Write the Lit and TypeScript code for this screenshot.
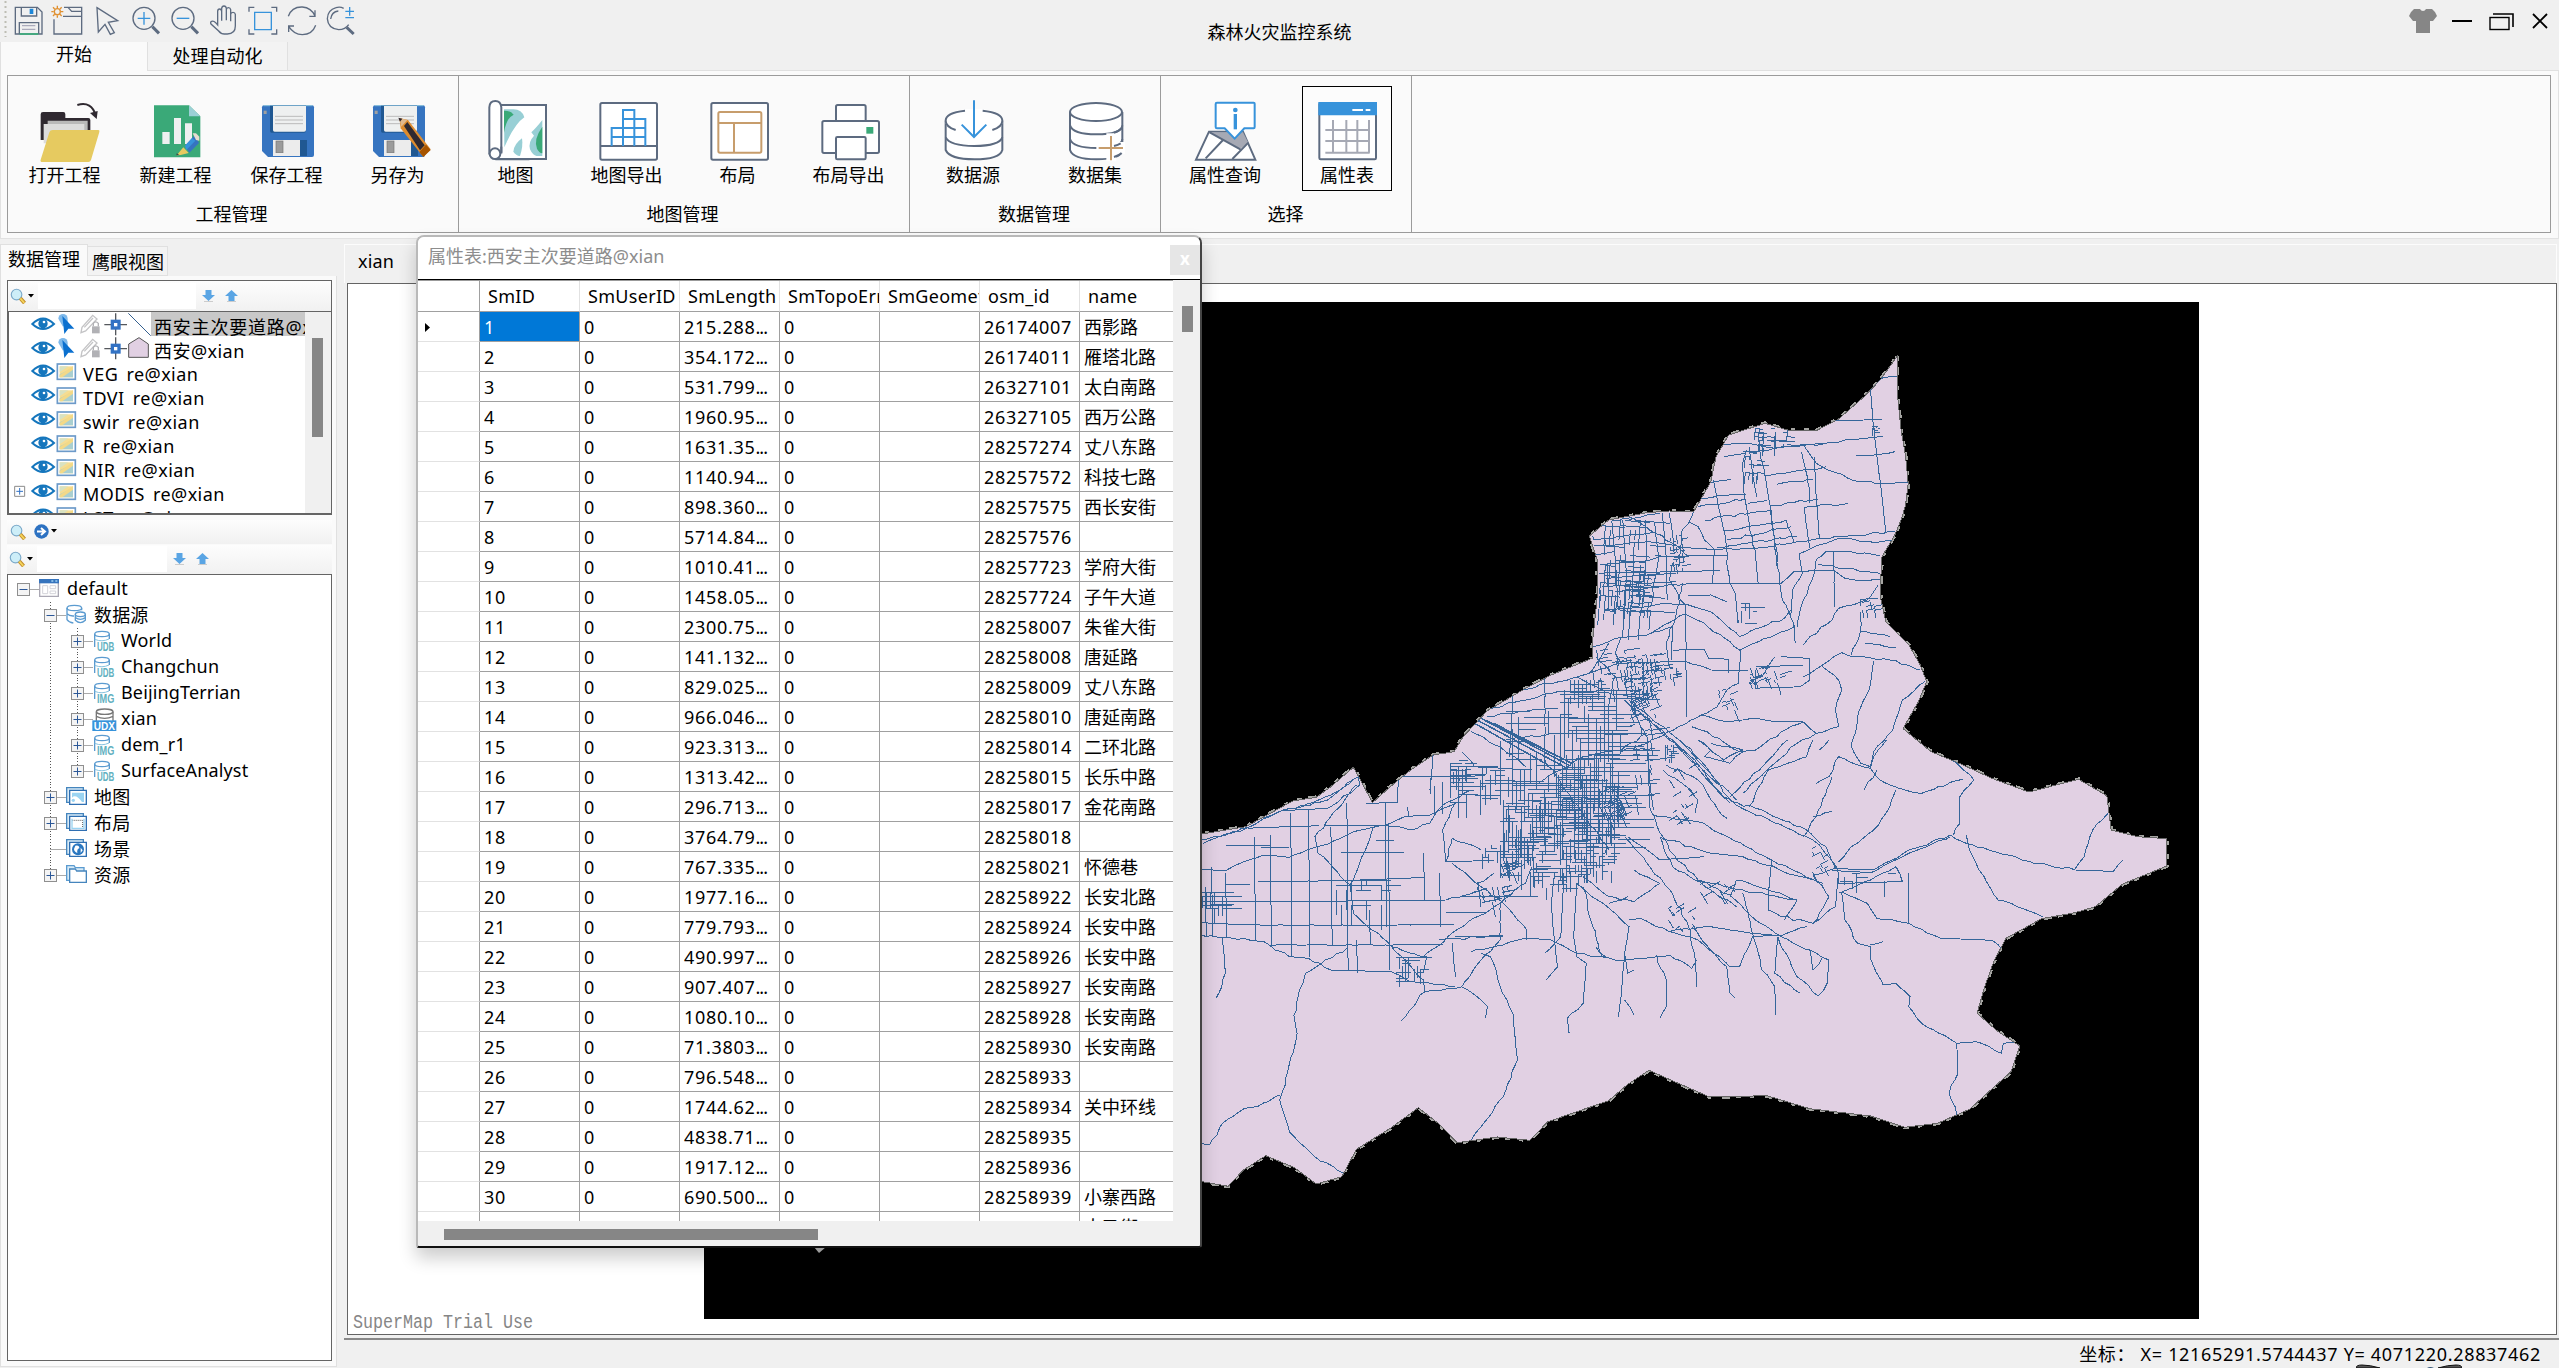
import { LitElement, html, svg, css, nothing } from "lit";
import { customElement, property } from "lit/decorators.js";
import { classMap } from "lit/directives/class-map.js";

const INK = "#5d6b80";
const BLUE = "#3793db";

/* ---------- quick-access icons, each on a 90-unit square ---------- */
const quickIcons = [
  svg`<path d="M4 4h66l14 14v66H4z"/><path d="M22 4v26h46V4"/><path d="M49 10h7v12h-7z" fill="#1c86d8" stroke="#1c86d8"/><path d="M16 84V50h58v34"/><path d="M24 59h40M24 70h40" stroke="#aab" /><path d="M17 84h56" stroke="#3aae7b" stroke-width="5"/>`,
  svg`<g stroke="#e09030" stroke-width="4"><circle cx="13" cy="17" r="9"/><path d="M13-1v7M13 28v7M-5 17h7M24 17h7M0 4l5 5M21 25l5 5M26 4l-5 5M0 30l5-5"/></g><path d="M3 40v44h83V4H33M86 16H56L45 4M30 31h56"/>`,
  svg`<path d="M15 5l62 39-28 5 18 31-12 5-16-30-20 23z"/>`,
  svg`<circle cx="39" cy="37" r="33"/><path d="M20 37h38M39 18v38" stroke="${BLUE}"/><path d="M64 62l20 20" stroke-width="9"/>`,
  svg`<circle cx="39" cy="37" r="33"/><path d="M20 37h38" stroke="${BLUE}"/><path d="M64 62l20 20" stroke-width="9"/>`,
  svg`<path d="M26 48V16q0-7 6-7 5 0 6 7v28V7q1-7 7-7 6 0 7 7v36V11q1-6 6-6 6 0 7 6v35V25q1-6 7-6 6 0 7 6v35q0 24-24 24H46q-10 0-17-9L6 54q-3-6 2-8 6-2 12 4l6 7z"/>`,
  svg`<path d="M3 17V4h16M70 4h16v13M86 70v14H70M19 84H3V70"/><path d="M20 19h50v52H20z" stroke="${BLUE}"/>`,
  svg`<path d="M4 31Q14 2 46 3q27 2 38 27M84 13v18H67M86 58Q76 86 46 86 20 85 5 61M5 78V60h16"/>`,
  svg`<path d="M53 7Q42 1 30 5 5 12 4 38q2 30 34 33 20 0 30-15"/><path d="M37 15q-20 2-23 24" /><path d="M58 16h26M71 3v26M58 35h26" stroke="${BLUE}"/><path d="M62 64l21 20" stroke-width="9"/>`,
];

/* ---------- ribbon icons, each on a 192-unit square, x centred on 0 ---------- */
const floppy = svg`<path d="M-69 16H75q6 0 6 6V165q0 6-6 6H-57L-75 153V22q0-6 6-6z" fill="#3674c0"/><path d="M-70 17H76" stroke="#8fc6dd" stroke-width="3"/><path d="M-51 17H57V92q0 6-6 6H-46q-5 0-5-6z" fill="#205892"/><path d="M-42 18H57V89q0 6-6 6H-37q-5 0-5-5z" fill="#eef0f0"/><path d="M-36 49H48M-36 60H48M-36 71H48" stroke="#bbb" stroke-width="3"/><rect x="-70" y="32" width="9" height="10" fill="#a0a0a0"/><rect x="-42" y="120" width="102" height="48" fill="#ececec"/><rect x="39" y="120" width="21" height="48" fill="#205892"/><rect x="-33" y="123" width="21" height="35" fill="#9b9b9b" stroke="#777" stroke-width="2"/>`;
const ribbonIcons: Record<string, unknown> = {
  open: svg`<path d="M-73 185V43q0-7 7-7H-5q6 0 6 7v11H70q6 0 6 6V120H-73z" fill="#2f2930"/><path d="M-52 62H68V130H-52z" fill="#b9b9b9"/><path d="M-64 72H58V130H-64z" fill="#dcdcdc"/><path d="M-37 90H100q5 0 3 6L78 180q-2 6-8 6H-68q-7 0-5-7L-47 97q2-7 10-7z" fill="#e6ca60"/><path d="M37 15Q80 2 93 48" fill="none" stroke="#2f2930" stroke-width="6"/><path d="M75 39l23-6-3 24z" fill="#2f2930"/>`,
  create: svg`<path d="M-66 16H39L73 49V172H-66z" fill="#3aa978"/><path d="M39 16L73 49H39z" fill="#9bd0d6"/><path d="M-41 96h22v36h-22zM-6 54h21v78H-6zM27 70h21v62H27z" fill="#eef0f0"/><path d="M27 137L57 105 69 129 40 158z" fill="#3674c0"/><path d="M27 137L48 114 58 122 31 150z" fill="#3793db"/><path d="M50 100h10l10 10v12L60 120z" fill="#e8ddd0"/><path d="M24 142L40 159 16 165 4 166z" fill="#e6ca60" transform="translate(-2 0)"/><path d="M2 160l8 5-9 1z" fill="#444"/>`,
  save: floppy,
  saveAs: svg`${floppy}<path d="M4 54L30 60 98 148 76 171 8 85z" fill="#de8c2e"/><path d="M18 78L28 66 80 136 66 151z" fill="#2f2930"/><path d="M4 54L28 60 10 80z" fill="#e0b98e"/><path d="M1 53l12 3-7 9z" fill="#2f2930"/><path d="M84 134L98 150 76 171 64 156z" fill="#a65400"/>`,
  map: svg`<g fill="#fff" stroke="${INK}" stroke-width="6"><path d="M-60 15H90V177H-60z"/><path d="M-44 158V22Q-46 3-62 3-79 3-80 22V160z"/><circle cx="-63" cy="161" r="16"/><path d="M-62 178H40" /><path d="M-44 158V140"/></g><path d="M-36 28h28q26 0 33 24-30 20-60 90z" fill="#98cfd5"/><path d="M-36 32q20 0 29 12-22 10-29 54z" fill="#3aa978"/><path d="M79 60Q60 84 46 97l8 10Q36 126 42 148q8 18 20 20H79z" fill="#98cfd5"/><path d="M79 80Q52 118 63 146q6 12 16 14z" fill="#3aa978"/><path d="M18 115Q-6 132-8 155q8 12 20 13 10-30 6-53z" fill="#98cfd5"/>`,
  mapExport: svg`<rect x="-80" y="9" width="170" height="170" rx="5" fill="#fff" stroke="${INK}" stroke-width="6"/><path d="M-80 138H90" stroke="${INK}" stroke-width="6"/><path d="M-46 138V84H55V138M-12 138V30H22V138M-12 57H55V84M-46 111H55" fill="none" stroke="${BLUE}" stroke-width="6"/>`,
  layout: svg`<rect x="-80" y="9" width="170" height="170" rx="5" fill="#fff" stroke="${INK}" stroke-width="6"/><rect x="-59" y="36" width="129" height="122" rx="5" fill="none" stroke="#c79d6c" stroke-width="6"/><path d="M-59 69H70M-12 69V158" stroke="#c79d6c" stroke-width="6"/>`,
  layoutExport: svg`<g fill="#fff" stroke="${INK}" stroke-width="6"><rect x="-39" y="15" width="89" height="60" rx="5"/><rect x="-80" y="63" width="170" height="96" rx="5"/><rect x="-39" y="111" width="89" height="67" rx="4"/></g><rect x="52" y="81" width="21" height="20" fill="#3aa978"/>`,
  source: svg`<g fill="#fff" stroke="${INK}" stroke-width="6"><path d="M-82 62V150Q-70 178 4 178 80 178 88 150V62" /><ellipse cx="3" cy="62" rx="85" ry="33" stroke="#fff"/><path d="M-24 32Q-82 38-82 62-82 80-52 90M29 32Q88 38 88 62 88 80 58 90M-82 112Q-70 137 4 138 80 137 88 112" fill="none"/></g><path d="M3 1V110M-34 74L3 111 40 74" fill="none" stroke="${BLUE}" stroke-width="6"/>`,
  dataset: svg`<g fill="#fff" stroke="${INK}" stroke-width="6"><path d="M-75 36V150Q-66 178 4 178 80 178 82 150V36"/><ellipse cx="3" cy="36" rx="78" ry="27"/><path d="M-75 76Q-66 103 4 103 80 103 82 76M-75 117Q-66 144 4 144 80 144 82 117" fill="none"/></g><path d="M34 100h30v84H34zM4 126h86v36H4z" fill="#fff"/><path d="M57 98q14-4 24-14M57 138q12-3 20-8M57 171q16-5 23-12" stroke="${INK}" stroke-width="6" fill="none"/><path d="M48 108V181M11 144H84" stroke="#c79d6c" stroke-width="6"/>`,
  query: svg`<path d="M-48 95H54L91 179H-87z" fill="#fff" stroke="${INK}" stroke-width="6"/><path d="M-46 97H54L70 128 45 147z" fill="#a6a9b4"/><path d="M-46 97L46 148M-58 175L-6 120M22 177L70 128" fill="none" stroke="${INK}" stroke-width="6"/><path d="M-24 8H86Q89 8 89 11V81Q89 85 86 85H58L29 116-1 85H-24Q-28 85-28 81V12Q-28 8-24 8z" fill="#fff" stroke="${BLUE}" stroke-width="6"/><circle cx="31" cy="30" r="7" fill="${BLUE}"/><path d="M31 42V88" stroke="${BLUE}" stroke-width="10"/>`,
  table: svg`<rect x="-83" y="9" width="170" height="169" rx="4" fill="#fff" stroke="${INK}" stroke-width="6"/><path d="M-86 6H90V46H-86z" fill="${BLUE}"/><path d="M16 30H48M56 30H70" stroke="#fff" stroke-width="6"/><path d="M-65 90H68M-65 123H68M-65 158H68M-42 60V158M-2 60V158M31 60V158M66 60V158" stroke="#a6a9b4" stroke-width="6"/>`,
};

interface Tool { icon: string; label: string; active?: boolean }
const ribbonGroups: { title: string; kind: string; tools: Tool[] }[] = [
  { title: "工程管理", kind: "g1", tools: [{ icon: "open", label: "打开工程" }, { icon: "create", label: "新建工程" }, { icon: "save", label: "保存工程" }, { icon: "saveAs", label: "另存为" }] },
  { title: "地图管理", kind: "g2", tools: [{ icon: "map", label: "地图" }, { icon: "mapExport", label: "地图导出" }, { icon: "layout", label: "布局" }, { icon: "layoutExport", label: "布局导出" }] },
  { title: "数据管理", kind: "g3", tools: [{ icon: "source", label: "数据源" }, { icon: "dataset", label: "数据集" }] },
  { title: "选择", kind: "g4", tools: [{ icon: "query", label: "属性查询" }, { icon: "table", label: "属性表", active: true }] },
];

@customElement("ribbon-bar")
export class RibbonBar extends LitElement {
  static styles = css`
    :host { display: block; }
    .box { box-sizing: border-box; height: 158px; border: 1px solid #9b9b9b; display: flex; }
    .group { box-sizing: border-box; border-right: 1px solid #9b9b9b; display: flex; flex-direction: column; }
    .g1 { width: 451px; padding-left: 1px; } .g2 { width: 451px; padding-left: 1px; }
    .g3 { width: 251px; padding-left: 2px; } .g4 { width: 251px; padding-left: 3px; }
    .tools { display: flex; padding-top: 10px; }
    .tool { width: 111px; display: flex; justify-content: center; }
    .g3 .tool, .g4 .tool { width: 122px; }
    .face { box-sizing: border-box; width: 90px; height: 105px; padding-top: 13px; border: 1px solid transparent; display: flex; flex-direction: column; align-items: center; white-space: nowrap; }
    .active { border-color: #000; background: #fcfcfc; }
    svg { width: 64px; height: 64px; overflow: visible; flex: none; }
    .label { line-height: 22px; font-size: 18px; margin-top: 0; }
    .title { text-align: center; line-height: 24px; margin-top: 11px; padding-right: 4px; }
  `;
  render() {
    return html`<div class="box">${ribbonGroups.map((g) => html`
      <div class="group ${g.kind}">
        <div class="tools">${g.tools.map((t) => html`
          <div class="tool"><div class=${classMap({ face: true, active: !!t.active })}>
            <svg viewBox="-96 0 192 192">${ribbonIcons[t.icon]}</svg>
            <div class="label">${t.label}</div>
          </div></div>`)}
        </div>
        <div class="title">${g.title}</div>
      </div>`)}</div>`;
  }
}

/* ---------- side panel ---------- */
const magnifier = svg`<circle cx="8" cy="8" r="5.6" fill="#cdeef8" stroke="#7ba9c9" stroke-width="1.2"/><path d="M12 12l4.5 5" stroke="#c08a28" stroke-width="4"/><path d="M12 12l4.2 4.7" stroke="#f4d45c" stroke-width="2"/>`;
const magTool = html`<svg class="mag" viewBox="0 0 18 18">${magnifier}</svg>`;
const caret = html`<svg class="caret" viewBox="0 0 6 4"><path d="M0 0h6L3 3.5z"/></svg>`;
const arrowDown = html`<svg class="arrow" viewBox="0 0 13 12"><path d="M3.5 0h6v5H13L6.5 11 0 5h3.5z" fill="#5aa5e4"/><path d="M2 11.5h9" stroke="#ccc"/></svg>`;
const arrowUp = html`<svg class="arrow" viewBox="0 0 13 12"><path d="M3.5 11h6V6H13L6.5 0 0 6h3.5z" fill="#5aa5e4"/><path d="M2 11.5h9" stroke="#ccc"/></svg>`;

const eye = svg`<path d="M70 36Q102 4 135 36 102 66 70 36z" fill="#fff" stroke="#1576bd" stroke-width="6"/><circle cx="102" cy="35" r="14" fill="#1576bd"/><circle cx="105" cy="30" r="4" fill="#fff"/>`;
const vectorMarks = svg`<path d="M148 20a14 14 0 1 1 28 0l0 10-14 14z" fill="#7db8ea"/><path d="M160 12L196 50H178L166 66z" fill="#0b70cf"/>
  <g fill="none" stroke="#c4c4c6" stroke-width="4"><path d="M216 62l3-16 32-36 13 11-34 36z"/><path d="M226 46l26-28"/></g><rect x="249" y="43" width="23" height="21" fill="#b1b1b5"/><path d="M253 43V34q7-9 15 0v9" fill="none" stroke="#b1b1b5" stroke-width="4"/>
  <path d="M286 38h68M320 4v66" stroke="#55585d" stroke-width="4"/><rect x="305" y="23" width="30" height="30" fill="#3272c4"/><rect x="315" y="33" width="10" height="10" fill="#fff"/>`;
const rasterMark = svg`<rect x="145" y="15" width="54" height="46" fill="#fff" stroke="#6c9ac9" stroke-width="5"/><rect x="152" y="22" width="40" height="33" fill="#f6dd92"/><path d="M152 22h26l-26 18z" fill="#d8e2c2"/><path d="M152 55V46l40-20v29z" fill="#a9cfd0"/><path d="M152 48L192 22v10L160 55h-8z" fill="#f3d987"/>`;
const boxedPlus = svg`<path d="M17 22h30v30H17z" fill="#fff" stroke="#8b8b8b" stroke-width="3"/><path d="M22 37h20M32 27v20" stroke="#3272c4" stroke-width="3"/>`;

const layers: { name: string; kind: "line" | "area" | "raster"; plus?: boolean }[] = [
  { name: "西安主次要道路@xian", kind: "line" }, { name: "西安@xian", kind: "area" },
  { name: "VEG re@xian", kind: "raster" }, { name: "TDVI re@xian", kind: "raster" }, { name: "swir re@xian", kind: "raster" },
  { name: "R re@xian", kind: "raster" }, { name: "NIR re@xian", kind: "raster" }, { name: "MODIS re@xian", kind: "raster", plus: true },
  { name: "LST re@xian", kind: "raster" },
];

const C1 = "#5b9bd0", C2 = "#87c3df";
const db = (tag: string, tint: string) => svg`<ellipse cx="27" cy="9" rx="22" ry="8" fill="#fff" stroke="${C1}" stroke-width="4"/><path d="M5 9V48M49 9V24" stroke="${C1}" stroke-width="4"/><path d="M5 25Q27 34 48 24" fill="none" stroke="${C2}" stroke-width="3"/><text x="12" y="61" font-size="38" font-weight="bold" textLength="52" lengthAdjust="spacingAndGlyphs" fill="${tint}" font-family="Liberation Sans Narrow, Liberation Sans, sans-serif">${tag}</text>`;
const sheet = (inner: unknown) => svg`<path d="M2 2H52V46H2z" fill="#d8ebf7" stroke="#4585bd" stroke-width="4"/><path d="M11 10H61V52H11z" fill="#fff" stroke="#2f6fb2" stroke-width="4"/>${inner}`;
const treeIcons: Record<string, unknown> = {
  root: svg`<path d="M2 2H58V52H2z" fill="#fff" stroke="#aaa8b4" stroke-width="4"/><path d="M0 0H60V13H0z" fill="#3674bd"/><path d="M37 6H43M49 6H55" stroke="#9fd0f2" stroke-width="4"/><path d="M11 20H26V44H11zM33 20H50V29H33zM33 36H50V44H33z" fill="none" stroke="#d4d4da" stroke-width="3"/>`,
  sources: svg`<ellipse cx="25" cy="9" rx="22" ry="8" fill="#fff" stroke="${C1}" stroke-width="4"/><path d="M3 9V44Q8 52 22 54M3 26Q10 34 24 33M47 9V16" fill="none" stroke="${C1}" stroke-width="4"/><ellipse cx="43" cy="28" rx="15" ry="7" fill="#fff" stroke="${C1}" stroke-width="4"/><path d="M28 28V46Q43 60 58 46V28M28 38Q43 48 58 38" fill="none" stroke="${C1}" stroke-width="4"/>`,
  udb: db("UDB", "#62b0c0"),
  img: db("IMG", "#62b0c0"),
  udx: svg`<ellipse cx="35" cy="8" rx="25" ry="8" fill="#fff" stroke="#777" stroke-width="4"/><path d="M10 8V36M60 8V36M10 22Q35 34 60 22" fill="none" stroke="#777" stroke-width="4"/><rect x="-2" y="34" width="72" height="32" fill="${BLUE}"/><text x="2" y="62" font-size="33" font-weight="bold" textLength="64" lengthAdjust="spacingAndGlyphs" fill="#fff" font-family="Liberation Sans, sans-serif">UDX</text>`,
  map: sheet(svg`<path d="M18 17H54V45H48Q30 20 18 32z" fill="#9bd4f2"/><circle cx="22" cy="40" r="5" fill="#9bd4f2"/>`),
  layout: sheet(svg`<path d="M19 22H50V44" fill="none" stroke="#555" stroke-width="3" stroke-dasharray="3 3"/><path d="M18 17V46H54V17" fill="none" stroke="#9bd4f2" stroke-width="4"/>`),
  scene: sheet(svg`<circle cx="36" cy="31" r="18" fill="#2a77c0"/><path d="M28 20q12-3 12 8-8 2-6 14-10-4-10-12zM44 26l6 8-6 8z" fill="#fff"/>`),
  folder: svg`<path d="M2 2H24L28 8H54V46H2z" fill="#d8ebf7" stroke="#5b9bd0" stroke-width="4"/><path d="M11 52V12H28L32 18H61V52z" fill="#fff" stroke="#4585bd" stroke-width="4"/>`,
};
interface Node { label: string; icon: string; depth: number; sign?: "+" | "-"; rails: number[]; ends?: boolean }
const tree: Node[] = [
  { label: "default", icon: "root", depth: 0, sign: "-", rails: [] },
  { label: "数据源", icon: "sources", depth: 1, sign: "-", rails: [1] },
  ...["World:udb", "Changchun:udb", "BeijingTerrian:img", "xian:udx", "dem_r1:img", "SurfaceAnalyst:udb"].map((s, i) => {
    const [label, icon] = s.split(":");
    return { label, icon, depth: 2, sign: "+" as const, rails: [1, 2], ends: i === 5 };
  }),
  { label: "地图", icon: "map", depth: 1, sign: "+", rails: [1] },
  { label: "布局", icon: "layout", depth: 1, sign: "+", rails: [1] },
  { label: "场景", icon: "scene", depth: 1, rails: [1] },
  { label: "资源", icon: "folder", depth: 1, sign: "+", rails: [1], ends: true },
];

@customElement("side-panel")
export class SidePanel extends LitElement {
  static styles = css`
    :host { display: flex; flex-direction: column; width: 337px; height: 1123px; }
    .tabs { display: flex; align-items: flex-end; height: 32px; }
    .tab { box-sizing: border-box; border: 1px solid #e0e0e0; border-bottom: 0; line-height: 28px; white-space: nowrap; }
    .on { width: 88px; height: 32px; padding-left: 7px; background: #fafafa; }
    .off { width: 80px; height: 30px; padding: 1px 0 0 4px; border-left: 0; background: #f3f3f3; border-bottom: 1px solid #e0e0e0; }
    .page { flex: 1; box-sizing: border-box; border: 1px solid #e0e0e0; border-top: 0; background: #fafafa; padding: 4px 4px 0 6px; display: flex; flex-direction: column; }
    .upper { box-sizing: border-box; height: 235px; border: 1px solid #646464; display: flex; flex-direction: column; }
    .bar { box-sizing: border-box; height: 30px; display: flex; align-items: center; background: linear-gradient(#fdfdfd, #f1f1f1); }
    .bar.find { padding-left: 1px; padding-bottom: 1px; }
    .bar2 { height: 24px; margin-top: 5px; padding-left: 2px; padding-bottom: 2px; }
    .bar3 { height: 29px; margin-top: 1px; padding-left: 1px; padding-bottom: 2px; }
    .mag { width: 17px; height: 17px; }
    .caret { width: 6px; height: 4px; margin-left: 2px; }
    .field { height: 26px; background: #fff; margin: 0 6px 0 4px; }
    .find .field { width: 158px; } .bar3 .field { width: 130px; margin-left: 4px; }
    .arrow { width: 13px; height: 12px; margin-right: 10px; }
    .go { width: 15px; height: 15px; margin-left: 8px; }
    .list { flex: 1; min-height: 0; border: solid #646464; border-width: 1px 0 1px 1px; background: #fff; display: flex; }
    .rows { flex: 1; overflow: hidden; min-width: 0; }
    .row { height: 24px; display: flex; white-space: nowrap; word-spacing: 3px; line-height: 28px; letter-spacing: .45px; }
    .row svg { height: 24px; flex: none; overflow: visible; }
    .vec { line-height: 30px; }
    .vec svg { width: 142px; } .ras svg { width: 71px; }
    .ras svg { margin-top: -1px; }
    .name { padding: 0 2px 0 3px; height: 24px; }
    .line .name { background: #c8c8c8; flex: 1; overflow: hidden; letter-spacing: .8px; }
    .scroll { width: 26px; background: #f0f0f0; padding: 26px 0 0 7px; box-sizing: border-box; }
    .thumb { width: 11px; height: 99px; background: #868686; }
    .tree { flex: 1; box-sizing: border-box; border: 1px solid #646464; background: #fff; padding-top: 1px; margin-bottom: 5px; }
    .node { height: 26px; display: flex; align-items: center; line-height: 26px; letter-spacing: .15px; }
    .latin { margin-bottom: 3px; }
    .rail { height: 26px; flex: none; }
    .ico { width: 22px; height: 22px; margin-right: 6px; overflow: visible; }
  `;
  private rail(n: Node) {
    const w = 31 + 27 * n.depth, bx = 15.5 + 27 * n.depth;
    return html`<svg class="rail" width=${w} height="26" viewBox="0 0 ${w} 26">
      ${n.rails.map((r) => svg`<path d="M${15.5 + 27 * r} 0V${n.ends && r === n.depth ? 13 : 26}" stroke="#555" stroke-dasharray="1 2"/>`)}
      <path d="M${bx} 13.5H${w}" stroke="#555" stroke-dasharray="1 1"/>
      ${n.sign ? svg`<rect x="${bx - 6}" y="7.5" width="12" height="12" fill="#f4f4f4" stroke="#8f8f8f"/><path d="M${bx - 4} 13.5H${bx + 4}" stroke="#2b5797"/>` : nothing}
      ${n.sign === "+" ? svg`<path d="M${bx} 9.5V17.5" stroke="#2b5797"/>` : nothing}
    </svg>`;
  }
  render() {
    return html`
      <div class="tabs"><div class="tab on">数据管理</div><div class="tab off">鹰眼视图</div></div>
      <div class="page">
        <div class="upper">
          <div class="bar find">${magTool}${caret}<div class="field"></div>${arrowDown}${arrowUp}</div>
          <div class="list">
            <div class="rows">${layers.map((l) => html`
              <div class="row ${l.kind} ${l.kind === "raster" ? "ras" : "vec"}">
                <svg viewBox="0 0 ${l.kind === "raster" ? 213 : 426} 72">
                  ${l.plus ? boxedPlus : nothing}${eye}${l.kind === "raster" ? rasterMark : vectorMarks}
                  ${l.kind === "line" ? svg`<path d="M358 4L425 71" stroke="#35608f" stroke-width="3"/>` : nothing}
                  ${l.kind === "area" ? svg`<path d="M359 64V24L390 5 418 24V64z" fill="#e1d0e3" stroke="#555" stroke-width="3"/>` : nothing}
                </svg><div class="name">${l.name}</div>
              </div>`)}</div>
            <div class="scroll"><div class="thumb"></div></div>
          </div>
        </div>
        <div class="bar bar2">${magTool}<svg class="go" viewBox="0 0 15 15"><circle cx="7.5" cy="7.5" r="7.2" fill="#2d72c2"/><path d="M3 7.5h7M7 4l4 3.5L7 11" stroke="#fff" stroke-width="2" fill="none"/></svg>${caret}</div>
        <div class="bar bar3">${magTool}${caret}<div class="field"></div>${arrowDown}${arrowUp}</div>
        <div class="tree">${tree.map((n) => html`<div class="node">${this.rail(n)}<svg class="ico" viewBox="0 -3 66 66">${treeIcons[n.icon]}</svg><span class=${/^\w/.test(n.label) ? "latin" : ""}>${n.label}</span></div>`)}</div>
      </div>`;
  }
}

const SX = 1 / 1.566, SY = 1 / 3, OX = 1200, OY = 290;
type Pt = [number, number];
const toPt = (s: string, dy = 0): Pt[] => {
  const v = s.trim().split(/[ ,]+/).map(Number);
  const out: Pt[] = [];
  for (let i = 0; i + 1 < v.length; i += 2) out.push([OX + v[i] * SX, OY + (v[i + 1] + dy) * SY]);
  return out;
};
const dOf = (pts: Pt[]) => "M" + pts.map((p) => p[0].toFixed(1) + " " + p[1].toFixed(1)).join("L");

const border = dOf(toPt(`1092 198 1092 310 1098 420 1105 500 1109 580 1105 645 1098 690 1088 735 1068 800 1066 870 1066 925 1074 995 1110 1065 1128 1125 1138 1175 1125 1235 1110 1285 1101 1316 1145 1385 1195 1425 1240 1465 1298 1506 1376 1468 1420 1517 1427 1620 1468 1640 1514 1646 1514 1728 1445 1782 1402 1850 1370 1868 1318 1886 1262 1945 1243 2015 1228 2095 1217 2170 1250 2225 1284 2268 1270 2345 1205 2458 1155 2500 1104 2512 1050 2478 955 2456 888 2417 798 2421 755 2385 703 2341 670 2383 640 2432 590 2465 545 2495 516 2551 466 2541 403 2558 373 2500 342 2453 298 2515 245 2578 222 2660 182 2682 148 2633 103 2597 68 2640 44 2689 0 2674 -200 2600 -500 2600 -600 2000 -300 1700 0 1633 72 1610 145 1533 182 1522 205 1490 240 1432 250 1465 270 1538 298 1490 330 1440 365 1395 398 1385 412 1340 450 1262 510 1195 550 1155 614 1105 615 1050 620 960 623 900 622 810 610 738 640 690 700 668 735 663 773 666 800 575 808 500 828 435 885 400 920 420 965 422 1000 387 1040 320 1065 270`)) + "Z";

const north = `1092 258 1070 262 1050 300 1054 400 1060 500 1068 620 1074 725|965 420 975 392 1020 392 1068 388|820 462 855 460 900 475 940 465 1000 457 1010 450 1070 440|820 500 855 490|850 485 975 462|1028 498 1088 485|945 465 965 520 1015 565 1060 582 1108 577|885 558 980 530|903 583 962 567|800 577 832 568|782 628 835 613 855 615|780 650 855 627|790 690 893 660|858 640 888 632|893 647 968 628|946 653 1015 640|820 723 918 690|825 750 925 710|810 773 935 738|755 773 800 778 858 777 1003 740 1088 725|860 470 866 560 872 620|875 450 885 560 892 640 905 830|856 480 850 520 852 615 860 700 870 800 874 880|804 570 812 650 820 720 830 880 838 910 843 1000|942 485 955 600 955 640|962 500 965 620 970 745|946 653 955 775|918 690 930 755|893 660 908 880 912 930 930 1000 932 1058|773 666 765 700 755 720 750 830|765 695 780 710 790 750 805 778 803 880|615 738 617 750 712 727|617 768 700 755 755 772|612 795 650 783|670 680 740 760 765 800|645 693 720 670|627 823 690 815 730 800 825 795|625 850 750 845 815 840|650 905 765 880 910 880 930 845 992 840 1010 865 1035 873 1065 868|635 865 700 855 745 850|630 890 700 880 745 875|635 960 700 950 725 940 765 945 800 965 845 1040 915 985 925 960|615 1070 650 1045 700 1035 760 972 790 1000 845 1080 930 1010|765 918 800 915 825 935|938 792 955 778 1000 745 1060 757 1085 750|938 792 943 850 928 900 925 985|1065 798 1020 785 980 785 965 808 962 850 945 930 935 1010|968 823 1065 850|992 785 994 950|1062 885 1045 930 1000 955 990 990 955 1040 945 1065|1062 925 1035 928 1035 1020 1020 1095|945 1160 975 1125 1005 1088 1020 1100 1090 1112 1128 1140|1033 1025 1080 1040|1042 1060 1090 1073|1055 1112 1048 1200 1035 1250 1020 1370 1035 1420 1050 1430 1055 1385 1085 1320 1100 1230 1135 1175|972 1125 1000 1170 1005 1200 995 1260 1000 1310 965 1330|740 1115 762 1115 800 1140 870 1140 870 1195 940 1190 955 1170 955 1105 910 1100|740 1080 790 1080 797 1105 827 1108 827 1150|847 1080 843 1180 825 1200 810 1250 785 1275 715 1345 660 1385|785 1275 830 1295 870 1285 900 1295 945 1295 910 1325 870 1380 845 1385 785 1320 770 1310|945 1295 965 1330 935 1360 900 1420 850 1510|740 820 735 870 760 945 762 1280|445 1260 510 1230 560 1205 620 1205 690 1225 720 1230|450 1280 520 1260 560 1255|505 1200 610 1150 660 1120 740 1115|645 693 650 800 655 960|662 690 668 850 662 1040|680 760 676 950|697 690 700 780 692 960|712 700 718 800 706 950|724 670 730 800 732 930|735 668 742 760|638 820 640 960|700 1035 740 1010 738 1110|755 880 745 980 730 1060 735 1130|660 1040 650 1090 660 1120|490 1210 485 1400|540 1160 540 1440|870 1130 945 1127|900 1100 880 1160 860 1180|640 1060 610 1150|665 1230 740 1350 800 1480 830 1540|672 1230 750 1350 812 1480|680 1265 700 1340 705 1500|690 1270 760 1390 840 1530|620 1100 650 1160 640 1250|590 1160 630 1200|410 1385 430 1430 520 1440|425 1325 470 1370 510 1430|365 1395 360 1500|780 1350 800 1380 790 1400 830 1420 850 1385|480 1350 560 1330 640 1330 700 1330|530 1480 600 1400 660 1380 700 1330`;

const south = `5 310 30 290 75 262 128 212 200 205 250 135 248 110 205 165 160 200 128 212|0 300 70 268 120 218 200 180 240 120|0 388 40 392 65 368 100 345 140 352 175 325 200 312 240 275 290 255 330 270 360 250 380 195 425 150|75 265 130 260 290 255 320 230 360 225 400 190|90 425 230 422 350 412|0 485 150 484 310 482 385 480 450 445|0 548 80 555 290 556 400 552|110 615 290 615 380 612|0 585 100 605 140 650 170 655 205 690 300 695 330 725 400 740|35 590 40 700 25 775|245 135 180 290 185 340 235 435 240 520 300 620 350 720 352 755 315 842|272 260 250 370 235 435|230 625 165 700 147 825 152 880 130 1050 125 1080 140 1175 180 1250 225 1300|125 1065 90 1100 70 1105 35 1150 15 1215 0 1210|440 640 455 650 470 740 490 820 497 960 475 1070 440 1160 425 1200|260 190 310 187 310 120|425 635 510 595 550 600 590 640 650 660 735 645 770 685 778 660|350 650 420 545 470 490 510 430 520 380|385 365 395 295 440 330|385 365 460 362|395 370 440 440 475 490 512 570 512 600|352 755 410 740 440 780 450 800 447 835|410 740 440 660 470 600 470 490|385 365 380 270 400 190|555 400 550 500 555 600 560 680 542 720|570 400 565 590 540 640|590 430 585 590 590 650 605 670 600 790 575 835 578 880|600 440 615 560 630 650|590 430 650 520 672 560 665 640 660 760 655 830|665 640 670 700 680 690|665 780 680 825|715 645 730 720 730 800 720 835|672 540 690 535 735 575 800 560 830 570 865 580 910 588 950 560|665 290 700 370 740 460 765 560 775 650 778 740|770 560 800 630 825 680 830 760 838 775|735 575 780 600 830 680 845 680 865 590 905 585|700 0 705 210 735 330 780 420 830 465 870 540 910 590 985 660 982 730 968 768 935 710 905 590|850 460 880 690 900 740 902 825|905 590 900 700 940 760|740 0 775 60 820 170 860 215 920 265 960 300 985 350 1000 400 995 500 960 550 910 530 890 510 890 460 895 360 880 345|752 0 790 75 832 185 880 210 950 270 980 320 995 385 960 405 985 470 960 550|730 75 780 120 800 180 825 235|725 90 755 130 780 180 775 220|710 225 780 245 880 345 960 420|720 290 800 340 850 350 930 405 975 430|670 290 720 360 790 350|720 290 740 380 840 500|780 420 850 450 930 480|840 420 830 470|840 420 935 480 915 540|600 410 640 470 680 485 720 430 680 390|640 490 670 470|540 60 640 330|995 385 1055 390 1110 330 1175 285 1210 315 1265 345 1300 365 1370 390 1430 395 1445 360|990 392 1050 398 1110 340 1175 290|1370 388 1385 350 1398 270 1422 220|1200 285 1205 330 1220 390 1250 480 1280 500 1320 530|1180 285 1190 250 1190 170 1212 120 1165 30 1140 0|1075 0 1055 50 1050 85 1065 120 1095 145 1130 160 1195 118|1060 90 1040 150|1050 85 1000 50 985 110 965 130|1090 150 1080 200 1055 270 1020 320 1000 365|990 110 965 230 945 290|960 230 990 215|1000 400 1000 430 1100 425 1090 380 1050 420 1000 460|1110 400 1110 550|1005 455 1045 490 1060 535 1110 550 1160 595 1240 600 1255 625|1005 460 1010 540 1030 610 1050 620 1050 655 1070 735 1090 730 1112 770 1110 800 1130 850 1185 910 1187 1000 1173 1060 1185 1125|1050 615 1070 605|1185 910 1215 905 1255 940 1258 910 1280 905|960 0 950 50 890 90 860 200|920 0 890 60 830 170|985 0 970 30|780 0 820 60 850 30 800 10|975 650 960 690 955 630|620 620 635 650|300 620 355 650 350 700|440 500 435 430 460 400|395 610 400 710|375 600 475 585`;

const runways = ["440 1285 580 1428", "436 1292 576 1436", "447 1290 560 1400", "430 1300 545 1425", "460 1300 582 1420"];

/* Linear congruential generator: the same street pattern on every load. */
let seed = 7;
const rnd = () => (seed = (seed * 16807) % 2147483647) / 2147483647;

/* Gives long roads their small bends. */
function bend(pts: Pt[]): Pt[] {
  const out: Pt[] = [pts[0]];
  for (let i = 1; i < pts.length; i++) {
    const [x0, y0] = pts[i - 1], [x1, y1] = pts[i];
    const n = Math.max(1, Math.floor(Math.hypot(x1 - x0, y1 - y0) / 6));
    const straight = Math.abs(x1 - x0) < 6 || Math.abs(y1 - y0) < 4;
    const k = straight ? 0.5 : 2.4;
    for (let j = 1; j <= n; j++) {
      const last = j === n;
      out.push([x0 + ((x1 - x0) * j) / n + (last ? 0 : (rnd() - 0.5) * k), y0 + ((y1 - y0) * j) / n + (last ? 0 : (rnd() - 0.5) * k)]);
    }
  }
  return out;
}

/* Street blocks: [x0, y0, x1, y1, count, longest run, lean, spacing] in canvas pixels. */
const blocks: number[][] = [
  [1560, 690, 1622, 760, 90, 44, 0, 4], [1558, 755, 1624, 850, 150, 44, 0, 4], [1500, 765, 1565, 850, 90, 34, 0, 4], [1500, 800, 1545, 878, 90, 24, 0, 3],
  [1482, 845, 1535, 862, 40, 12, 0, 3], [1545, 780, 1620, 850, 110, 24, 0, 3], [1560, 850, 1612, 878, 80, 14, 0, 3],
  [1626, 655, 1658, 695, 80, 14, 0.15, 4], [1630, 690, 1656, 720, 40, 14, 0.4, 4], [1570, 680, 1605, 700, 40, 14, 0, 4],
  [1655, 665, 1680, 680, 22, 10, 0.1, 3], [1450, 760, 1468, 782, 30, 14, 0, 3], [1422, 766, 1490, 806, 34, 30, 0, 4],
  [1600, 792, 1626, 820, 40, 18, 0.4, 4], [1665, 745, 1674, 760, 26, 8, 0, 2], [1600, 520, 1656, 614, 52, 34, -0.08, 5],
  [1600, 566, 1650, 612, 40, 18, -0.08, 4], [1670, 535, 1684, 570, 26, 10, 0.1, 3], [1755, 428, 1792, 450, 40, 14, -0.12, 4],
  [1745, 452, 1762, 478, 18, 14, -0.12, 4], [1872, 426, 1880, 434, 12, 7, 0, 2], [1737, 603, 1754, 626, 16, 12, 0, 4],
  [1750, 665, 1782, 688, 30, 12, 0.3, 3], [1718, 690, 1736, 715, 14, 12, 0.4, 4], [1862, 602, 1878, 616, 10, 10, 0.2, 4],
  [1396, 957, 1424, 982, 34, 14, 0, 3], [1336, 880, 1388, 912, 24, 26, 0, 5], [1202, 892, 1226, 912, 14, 24, 0, 4],
  [1500, 860, 1515, 880, 20, 12, 0.4, 3], [1530, 868, 1576, 890, 24, 18, 0, 4], [1665, 760, 1692, 825, 18, 12, 0.6, 4],
  [1668, 908, 1700, 930, 12, 10, 0.6, 4], [1812, 848, 1830, 880, 12, 10, 0.5, 4], [1840, 873, 1890, 884, 12, 16, 0, 4],
  [1472, 882, 1510, 905, 16, 18, 0.2, 5], [1700, 880, 1735, 905, 10, 12, 0.6, 4], [1630, 720, 1655, 798, 26, 22, 0.15, 5],
  [1592, 650, 1628, 688, 30, 16, 0.15, 4], [1500, 705, 1556, 765, 16, 50, 0, 6], [1475, 770, 1500, 800, 14, 30, 0, 5],
];

function streets(): string {
  let d = "";
  for (const [x0, y0, x1, y1, n, len, lean, step] of blocks) {
    for (let i = 0; i < n; i++) {
      const x = x0 + step * Math.floor((rnd() * (x1 - x0)) / step), y = y0 + step * Math.floor((rnd() * (y1 - y0)) / step);
      const l = step * Math.max(1, Math.round((0.25 + 0.75 * rnd()) * (len / step)));
      d += i % 2 ? `M${x}.5 ${y}l${(lean * l).toFixed(1)} ${l}` : `M${x} ${y}.5l${l} ${(-lean * l).toFixed(1)}`;
    }
  }
  /* farm-belt section roads west of the city */
  for (const [x, a, b] of [[18, 380, 590], [40, 400, 590], [85, 290, 600], [110, 285, 620], [142, 220, 650], [170, 210, 650], [205, 260, 615], [230, 190, 690], [265, 510, 615], [295, 250, 690], [325, 200, 230], [350, 340, 480], [375, 400, 560], [290, 190, 560], [8, 440, 590], [245, 600, 700]] as number[][])
    d += dOf(toPt(`${x} ${a} ${x + 2} ${b}`, 1350));
  for (const [y, a, b] of [[315, 40, 110], [322, 95, 140], [337, 220, 320], [302, 275, 303], [110, 310, 430], [130, 440, 715], [30, 570, 700], [432, 40, 78], [470, 0, 50], [495, 0, 50], [518, 385, 450], [468, 410, 530], [590, 400, 475]] as number[][])
    d += dOf(toPt(`${a} ${y} ${b} ${y}`, 1350));
  return d;
}
const roads = [...north.split("|").map((s) => dOf(bend(toPt(s)))), ...south.split("|").map((s) => dOf(bend(toPt(s, 1350))))].join("") + streets();
const runwayPath = runways.map((s) => dOf(toPt(s))).join("");

@customElement("map-canvas")
export class MapCanvas extends LitElement {
  static styles = css`
    :host { display: flex; flex-direction: column; width: 2213px; height: 1094px; }
    .tab { box-sizing: border-box; height: 39px; width: 2213px; border: 1px solid #fcfcfc; border-bottom: 0; display: flex; align-items: center; padding: 0 0 7px 13px; background: #f0f0f0; letter-spacing: .2px; }
    .canvas { box-sizing: border-box; margin-left: 3px; height: 1052px; width: 2210px; border: 1px solid #646464; background: #fff; }
    svg { display: block; width: 2208px; height: 1050px; }
    .mark { font: 20px "Liberation Mono", monospace; fill: #868686; }
  `;
  render() {
    return html`<div class="tab">xian</div>
      <div class="canvas"><svg viewBox="348 284 2208 1050">
        <defs><clipPath id="land"><path d=${border}/></clipPath></defs>
        <rect x="704" y="302" width="1495" height="1017"/>
        <path d=${border} fill="none" stroke="#a5a5a2" stroke-width="4" stroke-dasharray="5 6 8 11 4 9" shape-rendering="crispEdges"/>
        <path d=${border} fill="#e1d0e3" stroke="#666" stroke-width="1" shape-rendering="crispEdges"/>
        <g clip-path="url(#land)" fill="none" stroke="#35659a" shape-rendering="crispEdges">
          <path d=${roads}/><path d=${runwayPath} stroke-width="1.5"/>
        </g>
        <path d="M814 1247h12l-7 6z" fill="#bbb"/>
        <text class="mark" x="353" y="1328" textLength="180" lengthAdjust="spacingAndGlyphs">SuperMap Trial Use</text>
      </svg></div>`;
  }
}

/* ---------- attribute table ---------- */
const records = `215.288 26174007 西影路|354.172 26174011 雁塔北路|531.799 26327101 太白南路|1960.95 26327105 西万公路|1631.35 28257274 丈八东路|1140.94 28257572 科技七路|898.360 28257575 西长安街|5714.84 28257576|1010.41 28257723 学府大街|1458.05 28257724 子午大道|2300.75 28258007 朱雀大街|141.132 28258008 唐延路|829.025 28258009 丈八东路|966.046 28258010 唐延南路|923.313 28258014 二环北路|1313.42 28258015 长乐中路|296.713 28258017 金花南路|3764.79 28258018|767.335 28258021 怀德巷|1977.16 28258922 长安北路|779.793 28258924 长安中路|490.997 28258926 长安中路|907.407 28258927 长安南路|1080.10 28258928 长安南路|71.3803 28258930 长安南路|796.548 28258933|1744.62 28258934 关中环线|4838.71 28258935|1917.12 28258936|690.500 28258939 小寨西路|730.250 28258941 太乙街`
  .split("|").map((r) => r.split(" "));

@customElement("attribute-window")
export class AttributeWindow extends LitElement {
  @property() heading = "";
  static styles = css`
    :host { box-sizing: border-box; display: flex; flex-direction: column; width: 786px; height: 1013px; border: 2px solid #b9b9b9; border-right-color: #444; border-bottom: 2px solid #111; border-radius: 8px 8px 3px 3px; background: #f0f0f0; overflow: hidden; box-shadow: 0 10px 18px rgba(0,0,0,.2); }
    .head { height: 42px; flex: none; background: #fff; display: flex; justify-content: space-between; color: #8d8d8d; line-height: 39px; padding-left: 10px; border-bottom: 1px solid #000; }
    .x { width: 30px; height: 30px; margin-top: 8px; line-height: 28px; background: #e6e6e6; color: #fff; text-align: center; font-weight: bold; font-size: 17px; }
    .body { display: flex; height: 941px; }
    .grid { width: 755px; height: 941px; overflow: hidden; background: #fff; border-top: 1px solid #9b9b9b; box-sizing: border-box; }
    .tr { display: grid; grid-template-columns: 62px repeat(6, 100px) 93px; height: 30px; }
    .h { height: 31px; }
    .c { box-sizing: border-box; border-right: 1px solid #a0a0a0; border-bottom: 1px solid #a0a0a0; line-height: 30px; padding-left: 4px; overflow: hidden; white-space: nowrap; }
    .num { letter-spacing: .7px; }
    .dots { letter-spacing: -1px; }
    .c:last-child { border-right: 0; }
    .h .c { padding-left: 8px; border-right-color: #e2e2e2; letter-spacing: .3px; }
    .c:first-child { border-right-color: #a0a0a0; border-bottom-color: #e2e2e2; }
    .h .c:first-child { border-right-color: #a0a0a0; border-bottom-color: #a0a0a0; }
    .sel { background: #0078d7; color: #fff; }
    .v { width: 27px; padding: 26px 0 0 9px; box-sizing: border-box; }
    .vt { width: 11px; height: 26px; background: #868686; }
    .ht { width: 374px; height: 11px; margin: 8px 0 0 26px; background: #868686; }
    .cur { display: block; width: 5px; height: 9px; margin: 11px 0 0 3px; }
  `;
  render() {
    return html`
      <div class="head"><span>${this.heading}</span><span class="x">x</span></div>
      <div class="body">
        <div class="grid">
          <div class="tr h"><div class="c"></div>${["SmID", "SmUserID", "SmLength", "SmTopoErr", "SmGeometry", "osm_id", "name"].map((t) => html`<div class="c">${t}</div>`)}</div>
          ${records.map(([len, id, name], i) => html`<div class="tr">
            <div class="c">${i === 0 ? html`<svg class="cur" viewBox="0 0 5 9"><path d="M0 0l5 4.5L0 9z"/></svg>` : nothing}</div>
            <div class=${classMap({ c: true, num: true, sel: i === 0 })}>${i + 1}</div><div class="c num">0</div>
            <div class="c num">${len}<span class="dots">...</span></div><div class="c">0</div><div class="c"></div>
            <div class="c num">${id}</div><div class="c">${name ?? ""}</div></div>`)}
        </div>
        <div class="v"><div class="vt"></div></div>
      </div>
      <div class="ht"></div>`;
  }
}

/* ---------- shell ---------- */
@customElement("app-root")
export class AppRoot extends LitElement {
  static styles = css`
    :host { display: block; position: relative; width: 2559px; height: 1368px; overflow: hidden; background: #f0f0f0; color: #000; font: 18px/24px "Noto Sans", "Noto Sans CJK SC", sans-serif; }
    .top { height: 42px; display: grid; grid-template-columns: 1fr auto 1fr; }
    .quick { display: flex; padding: 6px 0 0 4px; }
    .quick svg { width: 30px; height: 30px; overflow: visible; margin-right: 9px; }
    .quick .grip { width: 3px; height: 37px; margin: -6px 7px 0 0; }
    .title { padding-top: 20px; }
    .win { display: flex; justify-content: flex-end; }
    .win svg { width: 150px; height: 40px; }
    .tabs { display: flex; height: 29px; }
    .tab { box-sizing: border-box; text-align: center; line-height: 25px; }
    .on { width: 147px; background: #fafafa; border-left: 1px solid #e0e0e0; }
    .off { width: 141px; background: #f3f3f3; border: 1px solid #e0e0e0; border-top: 0; padding-top: 2px; }
    .rest { flex: 1; border-bottom: 1px solid #e0e0e0; }
    .ribbon { height: 168px; box-sizing: border-box; background: #fafafa; border: 1px solid #e2e2e2; border-top: 0; padding: 4px 7px 0 6px; }
    .main { display: flex; gap: 7px; padding-top: 5px; height: 1124px; }
    .right { display: flex; flex-direction: column; width: 2215px; }
    .status { height: 28px; border-top: 2px solid #888; text-align: right; line-height: 29px; padding-right: 18px; letter-spacing: .68px; white-space: pre; }
    attribute-window { position: absolute; left: 416px; top: 235px; }
    .dock { position: absolute; left: 2356px; top: 1364px; width: 106px; height: 4px; }
  `;
  render() {
    return html`
      <div class="top">
        <div class="quick"><svg class="grip" viewBox="0 0 3 37"><path d="M1.5 1V37" stroke="#bdbdb4" stroke-width="2" stroke-dasharray="2 3"/></svg>${quickIcons.map((i) => html`<svg viewBox="0 0 90 90" fill="none" stroke=${INK} stroke-width="4">${i}</svg>`)}</div>
        <div class="title">森林火灾监控系统</div>
        <div class="win"><svg viewBox="0 0 150 40">
          <path d="M8 9h6q1 2 3 2t3-2h6l3 3 2 4-4 5h-3v12H10V21H7l-4-5 2-4z" fill="#868686" transform="translate(-3)"/>
          <path d="M43 21h20" stroke="#000" stroke-width="2"/>
          <path d="M84 14h20v13" fill="none" stroke="#000" stroke-width="1.6"/><rect x="81" y="17.5" width="19" height="12" fill="none" stroke="#000" stroke-width="1.4"/>
          <path d="M124 14l14 14M138 14l-14 14" stroke="#000" stroke-width="1.8"/></svg></div>
      </div>
      <div class="tabs"><div class="tab on">开始</div><div class="tab off">处理自动化</div><div class="rest"></div></div>
      <div class="ribbon"><ribbon-bar></ribbon-bar></div>
      <div class="main">
        <side-panel></side-panel>
        <div class="right"><map-canvas></map-canvas><div class="status">坐标： X= 12165291.5744437 Y= 4071220.28837462</div></div>
      </div>
      <attribute-window heading="属性表:西安主次要道路@xian"></attribute-window>
      <svg class="dock" viewBox="0 0 106 4"><path d="M0 4q0-3 6-3 8 0 18 3zM82 4q10-3 18-3 6 0 6 3z" fill="#555" stroke="#111"/><path d="M71 4q3-2 7 0z" fill="#357"/></svg>`;
  }
}
